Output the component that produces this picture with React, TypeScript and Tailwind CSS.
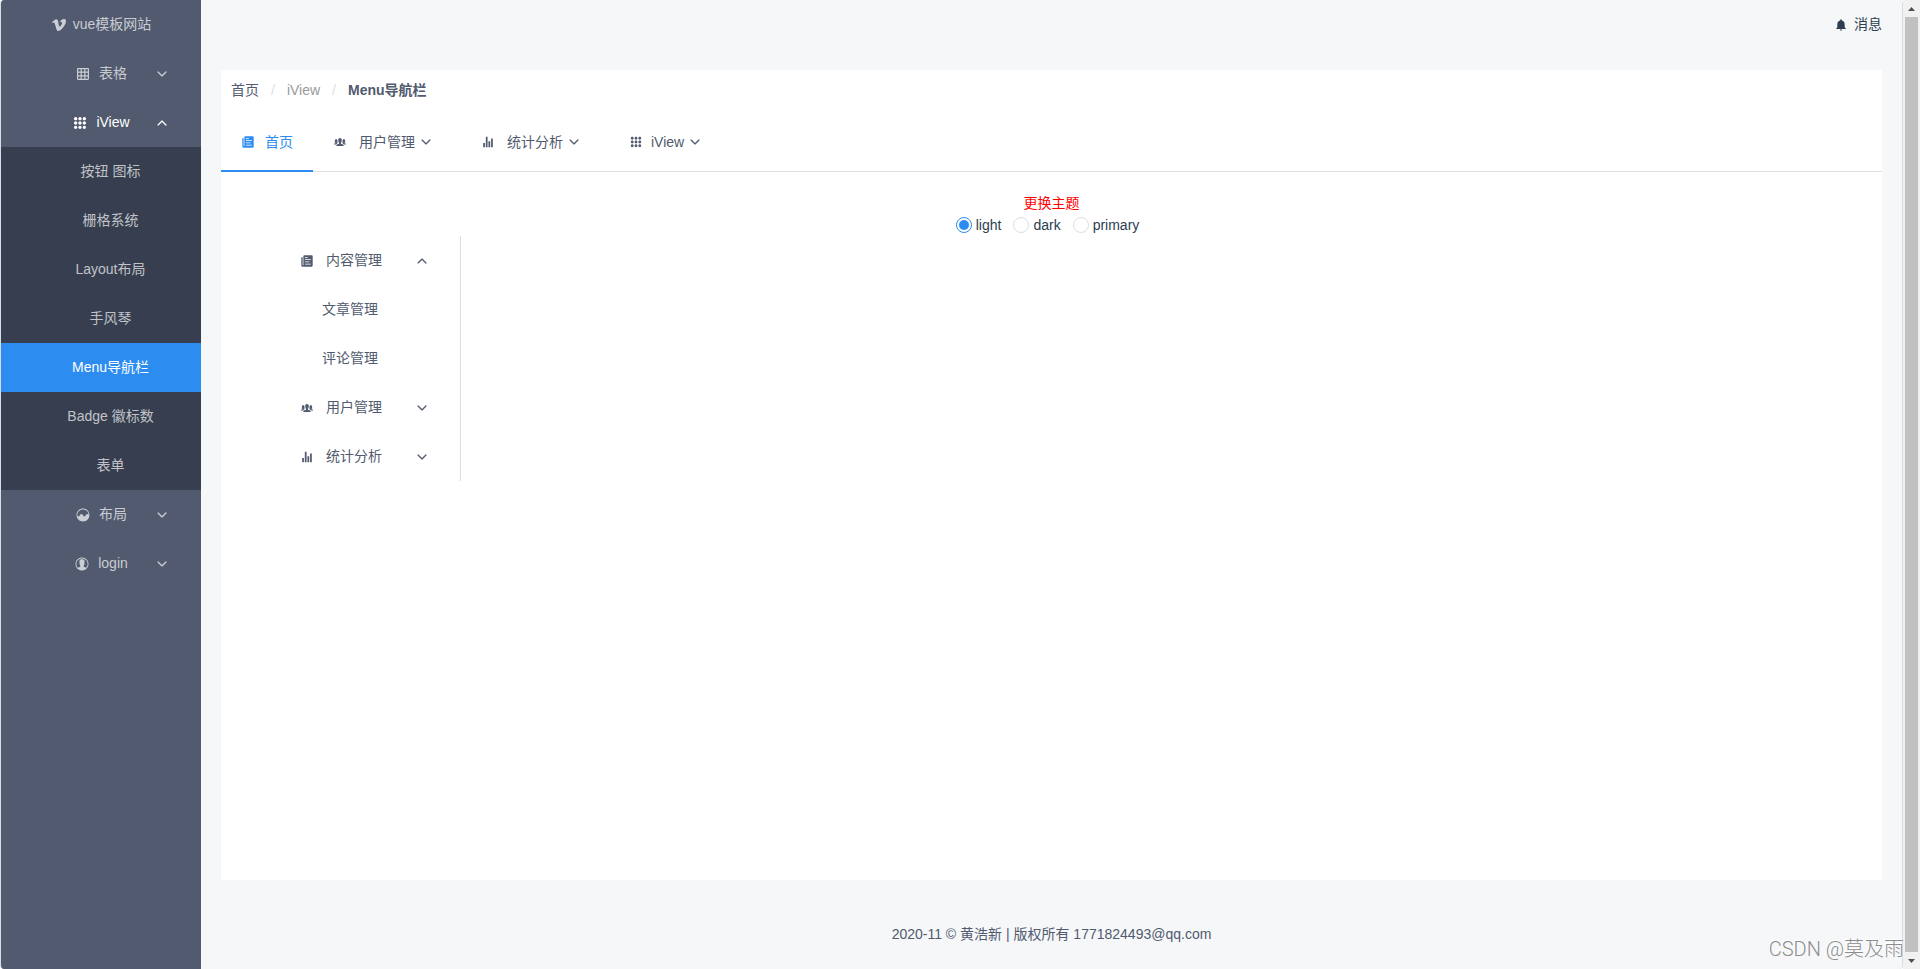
import React, { useState } from "react";
import type { IconType } from "react-icons";
import {
  IoIosAnalytics,
  IoIosArrowDown,
  IoIosArrowUp,
  IoIosContact,
  IoIosKeypad,
  IoIosPaper,
  IoIosPeople,
  IoIosStats,
  IoLogoVimeo,
  IoMdGrid,
  IoMdNotifications,
} from "react-icons/io";

const iviewPages = [
  "按钮 图标",
  "栅格系统",
  "Layout布局",
  "手风琴",
  "Menu导航栏",
  "Badge 徽标数",
  "表单",
];

function Chevron({ open = false }: { open?: boolean }) {
  const Icon = open ? IoIosArrowUp : IoIosArrowDown;
  return <Icon className="size-[14px] shrink-0" />;
}

function SidebarGroup({
  icon: Icon,
  label,
  open = false,
}: {
  icon: IconType;
  label: string;
  open?: boolean;
}) {
  return (
    <button
      type="button"
      aria-expanded={open}
      className={`flex h-[49px] w-full items-center pr-8 pl-[46px] ${
        open ? "text-white" : "text-white/70"
      }`}
    >
      <span className="flex flex-1 items-center justify-center gap-2">
        <Icon className="size-4" />
        {label}
      </span>
      <Chevron open={open} />
    </button>
  );
}

function Sidebar() {
  return (
    <nav className="w-[200px] shrink-0 bg-[#515a6e]">
      <a
        href="#home"
        className="flex h-[49px] items-center justify-center gap-[6px] text-white/70"
      >
        <IoLogoVimeo className="size-4" />
        vue模板网站
      </a>
      <SidebarGroup icon={IoMdGrid} label="表格" />
      <SidebarGroup icon={IoIosKeypad} label="iView" open />
      <ul className="bg-[#363e4f]">
        {iviewPages.map((page) => (
          <li key={page}>
            <a
              href="#page"
              className={`flex h-[49px] items-center justify-center pr-6 pl-[43px] ${
                page === "Menu导航栏" ? "bg-[#2d8cf0] text-white" : "text-white/70"
              }`}
            >
              {page}
            </a>
          </li>
        ))}
      </ul>
      <SidebarGroup icon={IoIosAnalytics} label="布局" />
      <SidebarGroup icon={IoIosContact} label="login" />
    </nav>
  );
}

function Breadcrumb() {
  return (
    <nav aria-label="breadcrumb" className="mb-[2px] flex h-10 items-center px-[10px]">
      <a href="#home">首页</a>
      <span className="px-3 text-[#dcdee2]">/</span>
      <a href="#iview" className="text-[#999999]">
        iView
      </a>
      <span className="px-3 text-[#dcdee2]">/</span>
      <span className="font-bold">Menu导航栏</span>
    </nav>
  );
}

function TopMenuItem({
  icon: Icon,
  label,
  gap = "mr-3",
}: {
  icon: IconType;
  label: string;
  gap?: string;
}) {
  return (
    <button type="button" className="flex h-[60px] items-center pr-7 pl-5">
      <Icon className={`size-[14px] ${gap}`} />
      <span className="mr-1">{label}</span>
      <Chevron />
    </button>
  );
}

function TopMenu() {
  return (
    <nav className="flex h-[60px] border-b border-[#dcdee2]">
      <a
        href="#home"
        className="flex h-[60px] items-center gap-[10px] border-b-2 border-[#2d8cf0] px-5 pt-[2px] text-[#2d8cf0]"
      >
        <IoIosPaper className="size-[14px]" />
        首页
      </a>
      <TopMenuItem icon={IoIosPeople} label="用户管理" />
      <TopMenuItem icon={IoIosStats} label="统计分析" />
      <TopMenuItem icon={IoIosKeypad} label="iView" gap="mr-2" />
    </nav>
  );
}

function SideMenuGroup({
  icon: Icon,
  label,
  open = false,
}: {
  icon: IconType;
  label: string;
  open?: boolean;
}) {
  return (
    <button
      type="button"
      aria-expanded={open}
      className="flex h-[49px] w-full items-center pr-[31px] pl-[79px]"
    >
      <Icon className="mr-3 size-[14px]" />
      {label}
      <span className="flex flex-1 justify-end">
        <Chevron open={open} />
      </span>
    </button>
  );
}

function SideMenu() {
  return (
    <nav className="w-[240px] border-r border-[#dcdee2]">
      <SideMenuGroup icon={IoIosPaper} label="内容管理" open />
      {["文章管理", "评论管理"].map((label) => (
        <a
          key={label}
          href="#article"
          className="flex h-[49px] items-center justify-center pr-6 pl-[43px]"
        >
          {label}
        </a>
      ))}
      <SideMenuGroup icon={IoIosPeople} label="用户管理" />
      <SideMenuGroup icon={IoIosStats} label="统计分析" />
    </nav>
  );
}

function ThemePicker() {
  const [theme, setTheme] = useState("light");
  return (
    <div
      role="radiogroup"
      aria-labelledby="theme-title"
      className="flex flex-col items-center pt-5 text-[#2c3e50]"
    >
      <span id="theme-title" className="leading-[22px] text-[#ff0000]">
        更换主题
      </span>
      <div className="flex h-[22px] items-center gap-3 pr-2">
        {["light", "dark", "primary"].map((name) => (
          <label key={name} className="flex items-center gap-1">
            <input
              type="radio"
              name="theme"
              checked={theme === name}
              onChange={() => setTheme(name)}
              className="grid size-4 appearance-none place-items-center rounded-full border border-[#dcdee2] bg-white before:size-[10px] before:rounded-full checked:border-[#2d8cf0] checked:before:bg-[#2d8cf0]"
            />
            {name}
          </label>
        ))}
      </div>
    </div>
  );
}

function Scrollbar() {
  return (
    <div
      aria-hidden="true"
      className="flex w-[17px] shrink-0 flex-col items-center bg-[#f1f1f1]"
    >
      <svg viewBox="0 0 17 17" className="size-[17px]" fill="#505050">
        <path d="M5 11h7L8.500 7z" />
      </svg>
      <div className="w-[13px] flex-1 bg-[#c1c1c1]" />
      <svg viewBox="0 0 17 17" className="size-[17px]" fill="#505050">
        <path d="M5 7h7L8.500 11z" />
      </svg>
    </div>
  );
}

export default function App() {
  return (
    <div className="relative flex min-h-screen bg-white font-['Liberation_Sans','Noto_Sans_CJK_SC',sans-serif] text-[14px] leading-[21px] text-[#515a6e]">
      <div className="flex flex-1 overflow-hidden rounded-[4px] border-x border-[#d7dde4] bg-[#f5f7f9]">
        <Sidebar />
        <div className="flex flex-1 flex-col px-5">
          <header className="flex h-[70px] justify-end pt-[14px] text-[#2c3e50]">
            <a href="#messages" className="flex h-[21px] items-center gap-[6px]">
              <IoMdNotifications className="size-[14px]" />
              消息
            </a>
          </header>
          <main className="flex-1 bg-white">
            <Breadcrumb />
            <TopMenu />
            <ThemePicker />
            <SideMenu />
          </main>
          <footer className="flex h-[89px] items-center justify-center pt-5">
            2020-11 © 黄浩新 | 版权所有 1771824493@qq.com
          </footer>
        </div>
      </div>
      <Scrollbar />
      <span className="pointer-events-none absolute right-4 bottom-2 font-['Roboto','Noto_Sans_CJK_SC',sans-serif] text-[20px] leading-6 font-light text-[#8c8c8c] [text-shadow:-1px_-1px_0_#ffffff]">
        CSDN @莫及雨
      </span>
    </div>
  );
}
